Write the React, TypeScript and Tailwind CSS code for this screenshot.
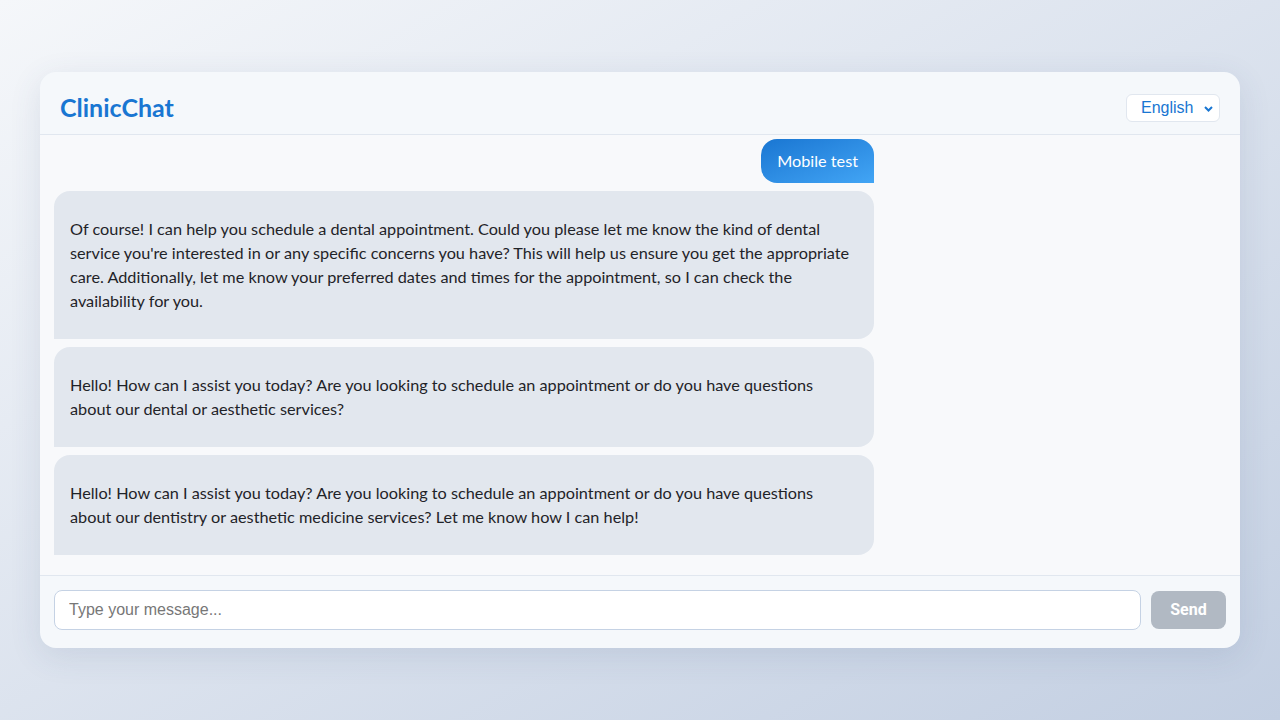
const messages: { from: 'user' | 'bot'; text: string }[] = [
  { from: 'user', text: 'Mobile test' },
  {
    from: 'bot',
    text: "Of course! I can help you schedule a dental appointment. Could you please let me know the kind of dental service you're interested in or any specific concerns you have? This will help us ensure you get the appropriate care. Additionally, let me know your preferred dates and times for the appointment, so I can check the availability for you.",
  },
  {
    from: 'bot',
    text: 'Hello! How can I assist you today? Are you looking to schedule an appointment or do you have questions about our dental or aesthetic services?',
  },
  {
    from: 'bot',
    text: 'Hello! How can I assist you today? Are you looking to schedule an appointment or do you have questions about our dentistry or aesthetic medicine services? Let me know how I can help!',
  },
]

function Bubble({ from, text }: { from: 'user' | 'bot'; text: string }) {
  if (from === 'user') {
    return (
      <div className="flex justify-end">
        <div className="rounded-2xl rounded-br-none bg-gradient-to-br from-[#1976d2] to-[#42a5f5] px-4 py-[10px] text-[16.25px] leading-6 text-white">
          {text}
        </div>
      </div>
    )
  }
  return (
    <div className="rounded-2xl rounded-bl-none bg-[#e2e7ee] px-4 py-[26px] text-[16.25px] leading-6 text-[#1f2328]">
      {text}
    </div>
  )
}

export default function App() {
  return (
    <div
      className="flex h-[720px] w-full items-start justify-center bg-gradient-to-br from-[#f5f7fa] to-[#c3cfe2] pt-[72px]"
      style={{ fontFamily: 'Lato, sans-serif' }}
    >
      <div className="flex h-[576px] w-[1200px] flex-col overflow-hidden rounded-2xl bg-[#f5f8fb] shadow-[0_8px_32px_rgba(60,80,120,0.12)]">
        <header className="flex h-[63px] shrink-0 items-center justify-between border-b border-[#e1e7ef] px-5 pt-[10px]">
          <h1 className="text-[25px] font-bold text-[#1976d2]">ClinicChat</h1>
          <div className="relative flex h-[28px] w-[94px] items-center rounded-md border border-[#e1e7ef] bg-white pl-[14px] text-[16px] text-[#1976d2]" style={{ fontFamily: '"Liberation Sans", Arial, sans-serif' }}>
            English
            <svg className="absolute right-[6px] top-[11px]" width="9" height="6" viewBox="0 0 9 6" fill="none">
              <path d="M1 1l3.5 3.5L8 1" stroke="#1976d2" strokeWidth="2" />
            </svg>
          </div>
        </header>
        <main className="flex-1 overflow-hidden bg-[#f8f9fb] px-[14px] pt-1">
          <div className="flex w-[820px] flex-col gap-2">
            {messages.map((m, i) => (
              <Bubble key={i} from={m.from} text={m.text} />
            ))}
          </div>
        </main>
        <footer className="flex h-[73px] shrink-0 items-start gap-[10px] border-t border-[#e1e7ef] px-[14px] pt-[14px]">
          <input
            placeholder="Type your message..."
            className="h-10 flex-1 rounded-lg border border-[#c5d2e4] bg-white px-[14px] text-[16px] text-[#333] outline-none placeholder:text-[#777]"
            style={{ fontFamily: '"Liberation Sans", Arial, sans-serif' }}
          />
          <button
            className="mt-px h-[38px] w-[75px] rounded-lg bg-[#b1b9c3] text-[16px] font-bold text-white"
            style={{ fontFamily: 'Roboto, "Liberation Sans", sans-serif' }}
          >
            Send
          </button>
        </footer>
      </div>
    </div>
  )
}
